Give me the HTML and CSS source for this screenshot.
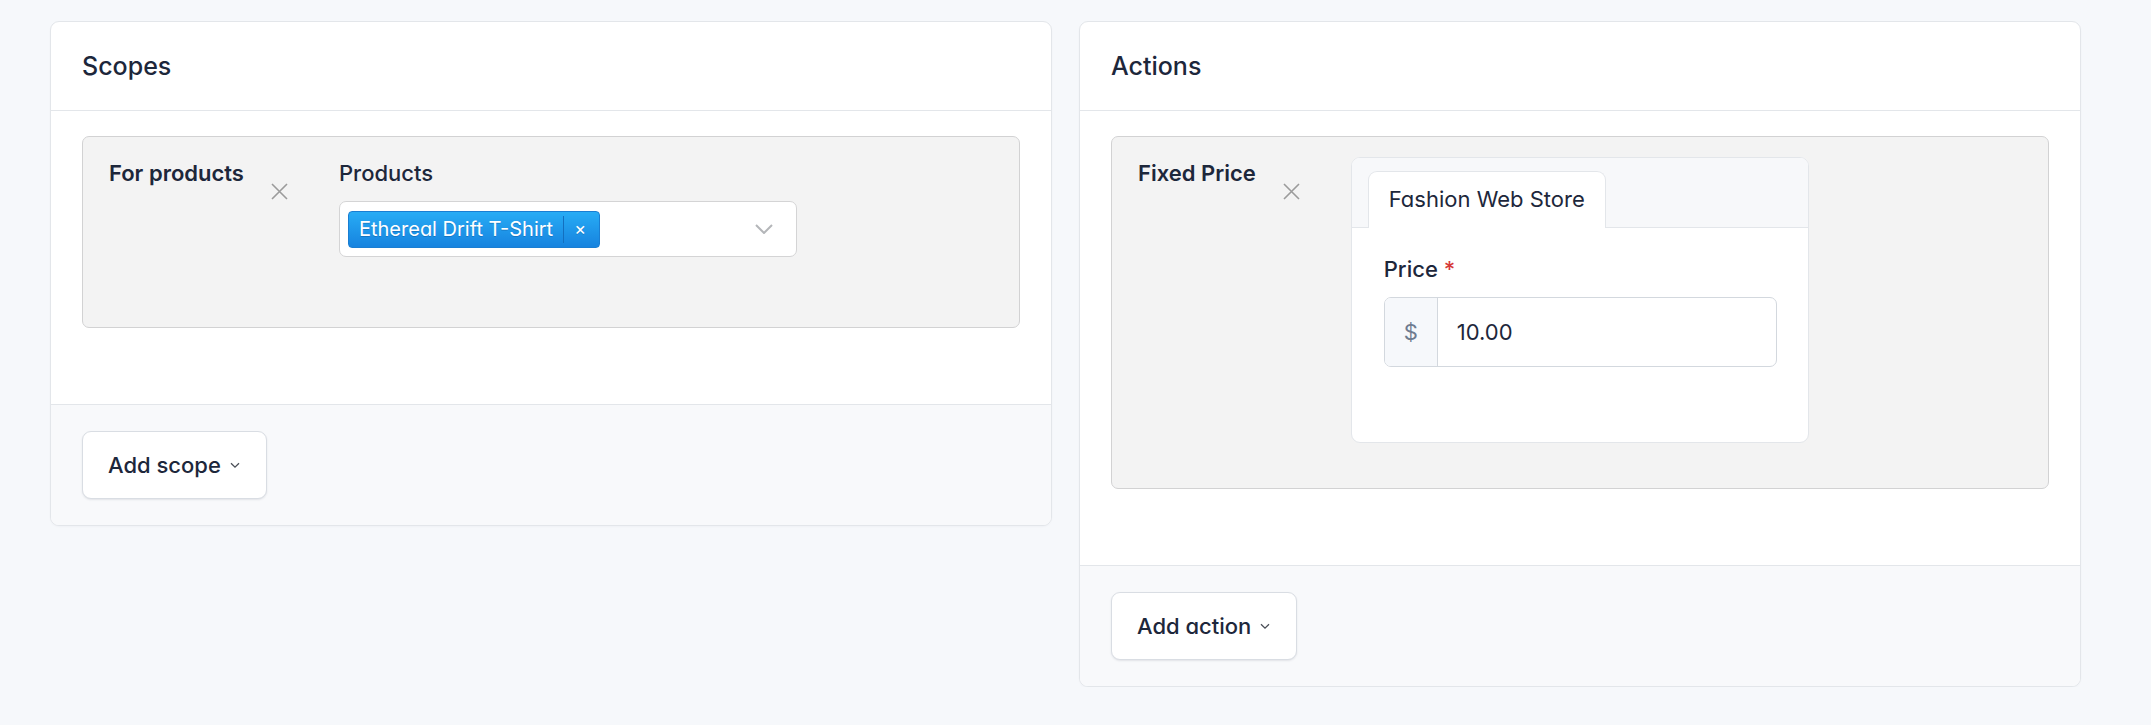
FILE: index.html
```html
<!DOCTYPE html>
<html lang="en">
<head>
<meta charset="utf-8">
<title>Catalog promotion</title>
<link rel="stylesheet" href="styles.css">
</head>
<body>
<div class="page">
  <section class="card">
    <div class="card-header"><h3 class="card-title">Scopes</h3></div>
    <div class="card-body">
      <div class="entry">
        <div class="entry-label">For products</div>
        <button class="entry-remove" type="button" aria-label="Remove">
          <svg width="17" height="17" viewBox="0 0 17 17"><path d="M1 1L16 16M16 1L1 16" stroke="#9b9b9b" stroke-width="1.6" fill="none"/></svg>
        </button>
        <div class="entry-fields">
          <div class="field">
            <label class="field-label">Products</label>
            <div class="select">
              <span class="tag">Ethereal Drift T-Shirt<span class="tag-remove">×</span></span>
              <svg class="select-chevron" width="18" height="10" viewBox="0 0 18 10"><path d="M1 1L9 9L17 1" stroke="#b4b6b9" stroke-width="2" fill="none"/></svg>
            </div>
          </div>
        </div>
      </div>
    </div>
    <div class="card-footer">
      <button class="btn" type="button">Add scope
        <svg width="10" height="7" viewBox="0 0 10 7"><path d="M1 1.2L5 5.2L9 1.2" stroke="#4a4f57" stroke-width="1.3" fill="none"/></svg>
      </button>
    </div>
  </section>

  <section class="card">
    <div class="card-header"><h3 class="card-title">Actions</h3></div>
    <div class="card-body">
      <div class="entry">
        <div class="entry-label">Fixed Price</div>
        <button class="entry-remove" type="button" aria-label="Remove">
          <svg width="17" height="17" viewBox="0 0 17 17"><path d="M1 1L16 16M16 1L1 16" stroke="#9b9b9b" stroke-width="1.6" fill="none"/></svg>
        </button>
        <div class="entry-fields">
          <div class="channel-card">
            <div class="channel-tabs">
              <div class="tab">Fashion Web Store</div>
            </div>
            <div class="channel-body">
              <label class="field-label">Price <span class="required">*</span></label>
              <div class="input-group">
                <span class="input-prefix">$</span>
                <span class="input-value">10.00</span>
              </div>
            </div>
          </div>
        </div>
      </div>
    </div>
    <div class="card-footer">
      <button class="btn" type="button">Add action
        <svg width="10" height="7" viewBox="0 0 10 7"><path d="M1 1.2L5 5.2L9 1.2" stroke="#4a4f57" stroke-width="1.3" fill="none"/></svg>
      </button>
    </div>
  </section>
</div>
</body>
</html>
```

FILE: styles.css
```css
html, body {
  margin: 0;
}

body {
  background: #f6f8fb;
  font-family: Inter, "Noto Sans", sans-serif;
  font-feature-settings: "cv03", "cv04", "cv11";
  color: #1d273b;
  font-size: 22px;
  line-height: 32px;
}

.page {
  display: grid;
  grid-template-columns: 1002px 1002px;
  column-gap: 27px;
  align-items: start;
  padding: 21px 0 0 50px;
}

.card {
  background: #fff;
  border: 1px solid #e3e6ea;
  border-radius: 9px;
  overflow: hidden;
  box-shadow: 0 1px 2px rgba(29, 39, 59, 0.03);
}

.card-header {
  height: 88px;
  display: flex;
  align-items: center;
  padding: 0 31px;
  border-bottom: 1px solid #e3e6ea;
}

.card-title {
  margin: 0;
  font-size: 25px;
  font-weight: 500;
  line-height: 32px;
}

.card-body {
  padding: 25px 31px 76px 31px;
}

.entry {
  display: flex;
  align-items: flex-start;
  background: #f3f3f3;
  border: 1px solid #d2d2d3;
  border-radius: 7px;
  padding: 20px 25px 45px 26px;
}

.entry-label {
  font-weight: 600;
  white-space: nowrap;
  margin-right: 27px;
}

.entry-remove {
  width: 17px;
  height: 17px;
  margin-top: 26px;
  padding: 0;
  border: 0;
  background: none;
  display: flex;
}

.entry-fields {
  margin-left: 51px;
  width: 458px;
}

.field {
  margin-bottom: 25px;
}

.field-label {
  display: block;
  font-weight: 500;
  margin-bottom: 12px;
}

.required {
  color: #d63939;
}

.select {
  height: 56px;
  box-sizing: border-box;
  background: #fff;
  border: 1px solid #d4d4d5;
  border-radius: 7px;
  display: flex;
  align-items: center;
  justify-content: space-between;
  padding: 0 23px 0 8px;
}

.tag {
  display: inline-flex;
  align-items: center;
  height: 37px;
  box-sizing: border-box;
  padding-left: 10px;
  border: 1px solid #1a7ed2;
  border-radius: 4px;
  background: linear-gradient(#28acf5, #1683df);
  color: #fff;
  font-size: 20px;
  line-height: 24px;
  text-shadow: 0 1px 0 rgba(0, 40, 90, 0.25);
}

.tag-remove {
  display: flex;
  align-items: center;
  height: 27px;
  margin-left: 10px;
  padding: 0 13px 0 10px;
  border-left: 1px solid #136fbf;
  font-size: 18px;
}

.channel-card {
  background: #fff;
  border: 1px solid #e3e6ea;
  border-radius: 9px;
  overflow: hidden;
}

.channel-tabs {
  display: flex;
  background: #f7f8fa;
  padding: 13px 16px 0;
  border-bottom: 1px solid #e3e6ea;
}

.tab {
  background: #fff;
  border: 1px solid #e3e6ea;
  border-bottom: 0;
  border-radius: 9px 9px 0 0;
  padding: 11px 20px 13px;
  margin-bottom: -1px;
}

.channel-body {
  padding: 25px 31px 50px 32px;
}

.input-group {
  display: flex;
  height: 70px;
  box-sizing: border-box;
  border: 1px solid #d3d8de;
  border-radius: 7px;
  overflow: hidden;
  margin-bottom: 25px;
}

.input-prefix {
  width: 52px;
  background: #f6f8fb;
  border-right: 1px solid #d3d8de;
  color: #6e7b8f;
  display: flex;
  align-items: center;
  justify-content: center;
}

.input-value {
  display: flex;
  align-items: center;
  padding-left: 19px;
}

.card-footer {
  background: #f8f9fb;
  border-top: 1px solid #e3e6ea;
  padding: 26px 31px 26px 31px;
}

.btn {
  display: inline-flex;
  align-items: center;
  gap: 9px;
  height: 68px;
  box-sizing: border-box;
  padding: 0 26px 0 25px;
  background: #fff;
  border: 1px solid #d9dde3;
  border-radius: 9px;
  box-shadow: 0 1px 2px rgba(29, 39, 59, 0.1);
  font: inherit;
  font-weight: 500;
  color: #1d273b;
}
```
